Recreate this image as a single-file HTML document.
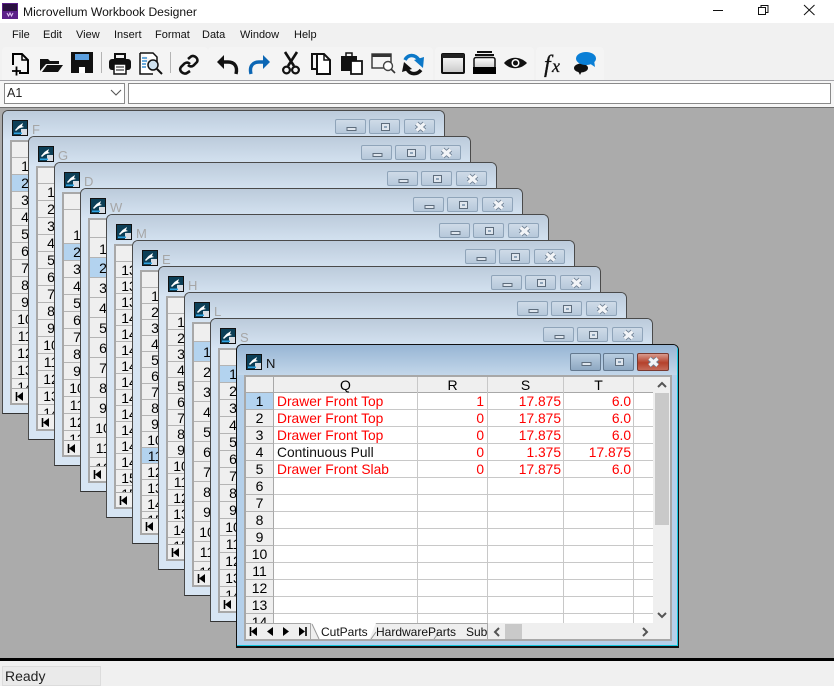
<!DOCTYPE html>
<html><head><meta charset="utf-8"><style>
html,body{margin:0;padding:0;width:834px;height:686px;overflow:hidden;background:#f0f0f0;font-family:"Liberation Sans",sans-serif;color:#000}
div,span,b{box-sizing:border-box}
.a{position:absolute}
.menu span{position:absolute;top:28px;font-size:11px;line-height:14px;color:#111}
.w{position:absolute;width:443px;height:304px;background:#d7e5f3;border:1px solid #4a4a4a;border-bottom-color:#333;border-radius:6px 6px 0 0;overflow:hidden}
.w .tb{position:absolute;left:0;top:0;right:0;height:30px;background:linear-gradient(#bccbdb,#d7e5f3)}
.w .t{position:absolute;left:29px;top:11px;font-size:13px;line-height:15px;color:#a6a6a6}
.w svg.i{position:absolute;left:9px;top:9px}
.btn{position:absolute;top:8px;height:15px;width:31px;border:1px solid #8fa4b9;border-radius:2px;background:linear-gradient(#cfdbe8,#b6c8da)}
.btn svg{position:absolute;left:0;top:0}
.g{position:absolute;left:7px;top:29px;width:427px;height:265px;border:2px solid #a8a8a8;background:#fff;overflow:hidden}
.rows{position:absolute;left:0;top:0;width:27px;height:246px;overflow:hidden;background:#efefef}
.rows b{display:block;font-weight:normal;font-size:14px;text-align:center;border-bottom:1px solid #b4b4b4;border-right:1px solid #a8a8a8;width:27px}
.rows b.s{background:#b3d3ef}
.nav{position:absolute;left:0;top:246px;width:64px;height:17px;background:#efefef;border-top:1px solid #a8a8a8}
.nav svg{position:absolute;left:0;top:0}
.cell{position:absolute;font-size:13.800px;line-height:17px;white-space:nowrap;color:#f00}
</style></head><body>
<svg width="0" height="0" style="position:absolute"><defs>
<symbol id="ic" viewBox="0 0 16 16"><rect x=".5" y=".5" width="15" height="15" fill="#0c3f57" stroke="#111"/><rect x="9" y="9" width="6" height="6" fill="#d8dde4"/><path d="M3 10 C5 8 6 6 8 5 L11 3 L10 6 L12 7 L8 8 C6 9 5 10 4 11Z" fill="#fff"/><rect x="2" y="12.5" width="8" height="1.5" fill="#2ea2e0"/></symbol>
<symbol id="mn" viewBox="0 0 31 15"><rect x="11" y="7.500" width="9" height="3" fill="#dfe6ee" stroke="#5d6c7c"/></symbol>
<symbol id="rs" viewBox="0 0 31 15"><rect x="11.500" y="3.500" width="8" height="7" fill="#dfe6ee" stroke="#5d6c7c"/><rect x="14" y="6" width="3" height="2" fill="#8fa4b9"/></symbol>
<symbol id="xx" viewBox="0 0 31 15"><path d="M11.500 3.500 L19.500 10.500 M19.500 3.500 L11.500 10.500" stroke="#6f8093" stroke-width="5"/><path d="M11.500 3.500 L19.500 10.500 M19.500 3.500 L11.500 10.500" stroke="#f2f4f7" stroke-width="3.200"/></symbol>
<symbol id="fst" viewBox="0 0 64 17"><path d="M4.500 3v9" stroke="#000" stroke-width="1.600"/><path d="M11 3v9l-6-4.500z" fill="#000"/></symbol>
</defs></svg>

<!-- title bar -->
<div class="a" style="left:0;top:0;width:834px;height:23px;background:#fff"></div>
<svg class="a" style="left:2px;top:3px" width="17" height="16"><rect width="16" height="16" fill="#5b1f8a"/><rect x="1" y="1" width="14" height="7" fill="#2a1040"/><path d="M5 10l1.5 3 1.5-3 1.5 3 1.5-3" stroke="#e3c8f5" fill="none"/></svg>
<div class="a" style="left:23px;top:4px;font-size:12.100px;line-height:16px;color:#111;white-space:nowrap">Microvellum Workbook Designer</div>
<svg class="a" style="left:700px;top:0" width="134" height="23" fill="none" stroke="#111" stroke-width="1"><path d="M13 10.5h10"/><path d="M58.5 7.5h7v7h-7zM61 7V5.5h7v7h-2"/><path d="M104 5l10.5 10M114.5 5L104 15"/></svg>

<!-- menu -->
<div class="a" style="left:0;top:23px;width:834px;height:57px;background:#f1f1f1"></div>
<div class="menu"><span style="left:12px">File</span><span style="left:43px">Edit</span><span style="left:76px">View</span><span style="left:114px">Insert</span><span style="left:155px">Format</span><span style="left:202px">Data</span><span style="left:240px">Window</span><span style="left:294px">Help</span></div>

<!-- toolbar bands -->
<div class="a" style="left:2px;top:47px;width:206px;height:33px;background:#f4f4f4;border-radius:4px 4px 0 0"></div>
<div class="a" style="left:208px;top:47px;width:225px;height:33px;background:#f4f4f4;border-radius:4px 4px 0 0"></div>
<div class="a" style="left:435px;top:47px;width:99px;height:33px;background:#f4f4f4;border-radius:4px 4px 0 0"></div>
<div class="a" style="left:536px;top:47px;width:68px;height:33px;background:#f4f4f4;border-radius:4px 4px 0 0"></div>

<svg class="a" style="left:0;top:0" width="620" height="80">
<defs><linearGradient id="gw" x1="0" y1="0" x2="0" y2="1"><stop offset="0" stop-color="#fff"/><stop offset="1" stop-color="#c8c8c8"/></linearGradient></defs>
<!-- new -->
<path d="M19 73h9V60l-6-6H13v11" fill="none" stroke="#000" stroke-width="2"/><path d="M22 54v6h6" fill="none" stroke="#000" stroke-width="1.500"/><path d="M12 71h9M16.500 66.500v9" stroke="#000" stroke-width="1.800"/>
<!-- open -->
<path d="M40 70V59h8l2 2h9v3H46l-6 7z" fill="#111"/><path d="M42 72l5-7h16l-5 7z" fill="#111"/>
<!-- save -->
<path d="M71 52h22v21H71z" fill="#111"/><rect x="75" y="54" width="14" height="6" fill="#5b9fdf"/><rect x="79" y="67" width="6" height="6" fill="#fff"/>
<path d="M101.500 52v21M170.500 52v21" stroke="#b4b4b4"/>
<!-- print -->
<path d="M115 54h10v5h-10z" fill="none" stroke="#111" stroke-width="2"/><rect x="109" y="59" width="22" height="11" rx="3" fill="#111"/><rect x="114" y="64" width="12" height="10" fill="#fff" stroke="#111" stroke-width="1.500"/><path d="M116 67h8M116 70h8" stroke="#111"/>
<!-- preview -->
<path d="M140 53h13l4 4v6M140 53v21h13" fill="#fff" stroke="#111" stroke-width="1.500"/><path d="M142 58h5M142 61h5M142 64h4M142 67h4" stroke="#3a8fd0" stroke-width="1.500"/><circle cx="153" cy="65" r="5" fill="#cfe2f0" stroke="#111" stroke-width="1.500"/><path d="M157 69l5 5" stroke="#111" stroke-width="2"/>
<!-- link -->
<path d="M188 59l3-2.500c3-2 8 2 6 5.500l-3.500 3.500c-2 1.500-4 1-5.500-.5" fill="none" stroke="#111" stroke-width="2.600"/><path d="M190 71l-3 2c-3 2-9-2-6-6l3.500-3.500c2-1.500 4-1 5.500.5" fill="none" stroke="#111" stroke-width="2.600"/>
<!-- undo/redo -->
<path d="M222 62h6c6 0 10 4 8 12" fill="none" stroke="#111" stroke-width="3.400"/><path d="M217 62l7-7v14z" fill="#111"/>
<path d="M265 62h-6c-6 0-10 4-8 12" fill="none" stroke="#0c66b4" stroke-width="3.400"/><path d="M270 62l-7-7v14z" fill="#0c66b4"/>
<!-- scissors -->
<path d="M285 52l9 14M297 52l-9 14" stroke="#111" stroke-width="2.600"/><circle cx="286.500" cy="70" r="3.400" fill="none" stroke="#111" stroke-width="2.200"/><circle cx="295.500" cy="70" r="3.400" fill="none" stroke="#111" stroke-width="2.200"/>
<!-- copy -->
<path d="M316 54h-4v15h5" fill="none" stroke="#111" stroke-width="2"/><path d="M317 54h7l6 6v14h-13z" fill="#fff" stroke="#111" stroke-width="2"/><path d="M324 54v6h6" fill="none" stroke="#111" stroke-width="1.500"/>
<!-- paste -->
<rect x="341" y="56" width="16" height="15" fill="#111"/><rect x="346" y="53" width="6" height="4" fill="none" stroke="#111" stroke-width="1.500"/><path d="M351 61h11v13h-11z" fill="#fff" stroke="#111" stroke-width="1.800"/>
<!-- window search -->
<rect x="372" y="54" width="19" height="14" fill="#f4f4f4" stroke="#333" stroke-width="1.400"/><rect x="372" y="54" width="19" height="3" fill="#333"/><circle cx="388" cy="66" r="4.500" fill="#fff" stroke="#444" stroke-width="1.400"/><path d="M391 69l4 4" stroke="#333" stroke-width="1.600"/>
<!-- refresh -->
<path d="M405 60C408 54 415 54 419 60" fill="none" stroke="#0c78c8" stroke-width="3.500"/><path d="M414 60L424 57L423 68z" fill="#0c78c8"/><path d="M421 70C417 75 410 75 407 69" fill="none" stroke="#111" stroke-width="3.500"/><path d="M412 69L402 72L404 62z" fill="#111"/>
<!-- window -->
<rect x="442" y="54" width="22" height="19" rx="1" fill="url(#gw)" stroke="#111" stroke-width="2"/><rect x="442" y="54" width="22" height="4" fill="#222"/>
<!-- stack -->
<path d="M477 52h15M475 55h19" stroke="#111" stroke-width="2"/><rect x="474" y="57.500" width="21" height="11" rx="2" fill="url(#gw)" stroke="#111" stroke-width="1.500"/><rect x="473" y="67" width="23" height="7" fill="#000"/>
<!-- eye -->
<path d="M504 63c6-7 16-7 23 0c-7 7-17 7-23 0z" fill="#111"/><circle cx="515.500" cy="63" r="4" fill="#fff"/><circle cx="515.500" cy="63" r="2.500" fill="#111"/>
<!-- chat -->
<ellipse cx="581" cy="68" rx="7" ry="4.500" fill="#111"/><path d="M578 71l2 4 2-4z" fill="#111"/>
<ellipse cx="586" cy="58.500" rx="10" ry="6.500" fill="#0a7fd6"/><path d="M589 63l6 4-1-7z" fill="#0a7fd6"/>
<text x="544" y="72" font-family="Liberation Serif" font-style="italic" font-size="24" fill="#111" stroke="#111" stroke-width=".3">f</text><text x="552" y="72" font-family="Liberation Serif" font-style="italic" font-size="18" fill="#111" stroke="#111" stroke-width=".3">x</text>
</svg>

<!-- formula bar -->
<div class="a" style="left:0;top:80px;width:834px;height:1px;background:#a3a3a8"></div>
<div class="a" style="left:0;top:81px;width:834px;height:26px;background:#f6f6f6"></div>
<div class="a" style="left:4px;top:83px;width:121px;height:21px;background:#fff;border:1px solid #8a8a8a;font-size:12.500px;line-height:18px;padding-left:2px;color:#222">A1</div>
<svg class="a" style="left:110px;top:88px" width="12" height="10"><path d="M1 2l5 5 5-5" fill="none" stroke="#555" stroke-width="1.100"/></svg>
<div class="a" style="left:128px;top:83px;width:703px;height:21px;background:#fff;border:1px solid #8a8a8a"></div>

<!-- MDI -->
<div class="a" style="left:0;top:107px;width:834px;height:551px;background:#ababab;border-top:1px solid #6e6e6e"></div>

<!-- F -->
<div class="w" style="left:2px;top:110px"><div class="tb"></div><svg class="i" width="16" height="16"><use href="#ic"/></svg><div class="t">F</div>
<div class="btn" style="left:332px"><svg width="31" height="15"><use href="#mn"/></svg></div><div class="btn" style="left:366px"><svg width="31" height="15"><use href="#rs"/></svg></div><div class="btn" style="left:401px"><svg width="31" height="15"><use href="#xx"/></svg></div>
<div class="g"><div class="rows" style="line-height:16px"><b style="height:16px"></b><b style="height:17px;line-height:17px">1</b><b class="s" style="height:17px;line-height:17px">2</b><b style="height:17px;line-height:17px">3</b><b style="height:17px;line-height:17px">4</b><b style="height:17px;line-height:17px">5</b><b style="height:17px;line-height:17px">6</b><b style="height:17px;line-height:17px">7</b><b style="height:17px;line-height:17px">8</b><b style="height:17px;line-height:17px">9</b><b style="height:17px;line-height:17px">10</b><b style="height:17px;line-height:17px">11</b><b style="height:17px;line-height:17px">12</b><b style="height:17px;line-height:17px">13</b><b style="height:17px;line-height:17px">14</b></div><div class="nav"><svg width="64" height="17"><use href="#fst"/></svg></div></div></div>

<!-- G -->
<div class="w" style="left:28px;top:136px"><div class="tb"></div><svg class="i" width="16" height="16"><use href="#ic"/></svg><div class="t">G</div>
<div class="btn" style="left:332px"><svg width="31" height="15"><use href="#mn"/></svg></div><div class="btn" style="left:366px"><svg width="31" height="15"><use href="#rs"/></svg></div><div class="btn" style="left:401px"><svg width="31" height="15"><use href="#xx"/></svg></div>
<div class="g"><div class="rows"><b style="height:16px"></b><b style="height:17px;line-height:17px">1</b><b style="height:17px;line-height:17px">2</b><b style="height:17px;line-height:17px">3</b><b style="height:17px;line-height:17px">4</b><b style="height:17px;line-height:17px">5</b><b style="height:17px;line-height:17px">6</b><b style="height:17px;line-height:17px">7</b><b style="height:17px;line-height:17px">8</b><b style="height:17px;line-height:17px">9</b><b style="height:17px;line-height:17px">10</b><b style="height:17px;line-height:17px">11</b><b style="height:17px;line-height:17px">12</b><b style="height:17px;line-height:17px">13</b><b style="height:17px;line-height:17px">14</b></div><div class="nav"><svg width="64" height="17"><use href="#fst"/></svg></div></div></div>

<!-- D -->
<div class="w" style="left:54px;top:162px"><div class="tb"></div><svg class="i" width="16" height="16"><use href="#ic"/></svg><div class="t">D</div>
<div class="btn" style="left:332px"><svg width="31" height="15"><use href="#mn"/></svg></div><div class="btn" style="left:366px"><svg width="31" height="15"><use href="#rs"/></svg></div><div class="btn" style="left:401px"><svg width="31" height="15"><use href="#xx"/></svg></div>
<div class="g"><div class="rows"><b style="height:16px"></b><b style="height:34px;line-height:50px">1</b><b class="s" style="height:17px;line-height:17px">2</b><b style="height:17px;line-height:17px">3</b><b style="height:17px;line-height:17px">4</b><b style="height:17px;line-height:17px">5</b><b style="height:17px;line-height:17px">6</b><b style="height:17px;line-height:17px">7</b><b style="height:17px;line-height:17px">8</b><b style="height:17px;line-height:17px">9</b><b style="height:17px;line-height:17px">10</b><b style="height:17px;line-height:17px">11</b><b style="height:17px;line-height:17px">12</b><b style="height:17px;line-height:17px">13</b></div><div class="nav"><svg width="64" height="17"><use href="#fst"/></svg></div></div></div>

<!-- W -->
<div class="w" style="left:80px;top:188px"><div class="tb"></div><svg class="i" width="16" height="16"><use href="#ic"/></svg><div class="t">W</div>
<div class="btn" style="left:332px"><svg width="31" height="15"><use href="#mn"/></svg></div><div class="btn" style="left:366px"><svg width="31" height="15"><use href="#rs"/></svg></div><div class="btn" style="left:401px"><svg width="31" height="15"><use href="#xx"/></svg></div>
<div class="g"><div class="rows"><b style="height:18px"></b><b style="height:20px;line-height:22px">1</b><b class="s" style="height:20px;line-height:20px">2</b><b style="height:20px;line-height:20px">3</b><b style="height:20px;line-height:20px">4</b><b style="height:20px;line-height:20px">5</b><b style="height:20px;line-height:20px">6</b><b style="height:20px;line-height:20px">7</b><b style="height:20px;line-height:20px">8</b><b style="height:20px;line-height:20px">9</b><b style="height:20px;line-height:20px">10</b><b style="height:20px;line-height:20px">11</b><b style="height:20px;line-height:20px">12</b></div><div class="nav"><svg width="64" height="17"><use href="#fst"/></svg></div></div></div>

<!-- M -->
<div class="w" style="left:106px;top:214px"><div class="tb"></div><svg class="i" width="16" height="16"><use href="#ic"/></svg><div class="t">M</div>
<div class="btn" style="left:332px"><svg width="31" height="15"><use href="#mn"/></svg></div><div class="btn" style="left:366px"><svg width="31" height="15"><use href="#rs"/></svg></div><div class="btn" style="left:401px"><svg width="31" height="15"><use href="#xx"/></svg></div>
<div class="g"><div class="rows"><b style="height:16px"></b><b style="height:16px;line-height:16px">13</b><b style="height:16px;line-height:16px">13</b><b style="height:16px;line-height:16px">13</b><b style="height:16px;line-height:16px">14</b><b style="height:16px;line-height:16px">14</b><b style="height:16px;line-height:16px">14</b><b style="height:16px;line-height:16px">14</b><b style="height:16px;line-height:16px">14</b><b style="height:16px;line-height:16px">14</b><b style="height:16px;line-height:16px">14</b><b style="height:16px;line-height:16px">14</b><b style="height:16px;line-height:16px">14</b><b style="height:16px;line-height:16px">14</b><b style="height:16px;line-height:16px">15</b><b style="height:16px;line-height:16px">15</b></div><div class="nav"><svg width="64" height="17"><use href="#fst"/></svg></div></div></div>

<!-- E -->
<div class="w" style="left:132px;top:240px"><div class="tb"></div><svg class="i" width="16" height="16"><use href="#ic"/></svg><div class="t">E</div>
<div class="btn" style="left:332px"><svg width="31" height="15"><use href="#mn"/></svg></div><div class="btn" style="left:366px"><svg width="31" height="15"><use href="#rs"/></svg></div><div class="btn" style="left:401px"><svg width="31" height="15"><use href="#xx"/></svg></div>
<div class="g"><div class="rows"><b style="height:16px"></b><b style="height:16px;line-height:16px">1</b><b style="height:16px;line-height:16px">2</b><b style="height:16px;line-height:16px">3</b><b style="height:16px;line-height:16px">4</b><b style="height:16px;line-height:16px">5</b><b style="height:16px;line-height:16px">6</b><b style="height:16px;line-height:16px">7</b><b style="height:16px;line-height:16px">8</b><b style="height:16px;line-height:16px">9</b><b style="height:16px;line-height:16px">10</b><b class="s" style="height:16px;line-height:16px">11</b><b style="height:16px;line-height:16px">12</b><b style="height:16px;line-height:16px">13</b><b style="height:16px;line-height:16px">14</b><b style="height:16px;line-height:16px">15</b></div><div class="nav"><svg width="64" height="17"><use href="#fst"/></svg></div></div></div>

<!-- H -->
<div class="w" style="left:158px;top:266px"><div class="tb"></div><svg class="i" width="16" height="16"><use href="#ic"/></svg><div class="t">H</div>
<div class="btn" style="left:332px"><svg width="31" height="15"><use href="#mn"/></svg></div><div class="btn" style="left:366px"><svg width="31" height="15"><use href="#rs"/></svg></div><div class="btn" style="left:401px"><svg width="31" height="15"><use href="#xx"/></svg></div>
<div class="g"><div class="rows"><b style="height:16px"></b><b style="height:16px;line-height:16px">1</b><b style="height:16px;line-height:16px">2</b><b style="height:16px;line-height:16px">3</b><b style="height:16px;line-height:16px">4</b><b style="height:16px;line-height:16px">5</b><b style="height:16px;line-height:16px">6</b><b style="height:16px;line-height:16px">7</b><b style="height:16px;line-height:16px">8</b><b style="height:16px;line-height:16px">9</b><b style="height:16px;line-height:16px">10</b><b style="height:16px;line-height:16px">11</b><b style="height:16px;line-height:16px">12</b><b style="height:16px;line-height:16px">13</b><b style="height:16px;line-height:16px">14</b><b style="height:16px;line-height:16px">15</b></div><div class="nav"><svg width="64" height="17"><use href="#fst"/></svg></div></div></div>

<!-- L -->
<div class="w" style="left:184px;top:292px"><div class="tb"></div><svg class="i" width="16" height="16"><use href="#ic"/></svg><div class="t">L</div>
<div class="btn" style="left:332px"><svg width="31" height="15"><use href="#mn"/></svg></div><div class="btn" style="left:366px"><svg width="31" height="15"><use href="#rs"/></svg></div><div class="btn" style="left:401px"><svg width="31" height="15"><use href="#xx"/></svg></div>
<div class="g"><div class="rows"><b style="height:18px"></b><b class="s" style="height:20px;line-height:20px">1</b><b style="height:20px;line-height:20px">2</b><b style="height:20px;line-height:20px">3</b><b style="height:20px;line-height:20px">4</b><b style="height:20px;line-height:20px">5</b><b style="height:20px;line-height:20px">6</b><b style="height:20px;line-height:20px">7</b><b style="height:20px;line-height:20px">8</b><b style="height:20px;line-height:20px">9</b><b style="height:20px;line-height:20px">10</b><b style="height:20px;line-height:20px">11</b><b style="height:20px;line-height:20px">12</b></div><div class="nav"><svg width="64" height="17"><use href="#fst"/></svg></div></div></div>

<!-- S -->
<div class="w" style="left:210px;top:318px"><div class="tb"></div><svg class="i" width="16" height="16"><use href="#ic"/></svg><div class="t">S</div>
<div class="btn" style="left:332px"><svg width="31" height="15"><use href="#mn"/></svg></div><div class="btn" style="left:366px"><svg width="31" height="15"><use href="#rs"/></svg></div><div class="btn" style="left:401px"><svg width="31" height="15"><use href="#xx"/></svg></div>
<div class="g"><div class="rows"><b style="height:16px"></b><b class="s" style="height:17px;line-height:17px">1</b><b style="height:17px;line-height:17px">2</b><b style="height:17px;line-height:17px">3</b><b style="height:17px;line-height:17px">4</b><b style="height:17px;line-height:17px">5</b><b style="height:17px;line-height:17px">6</b><b style="height:17px;line-height:17px">7</b><b style="height:17px;line-height:17px">8</b><b style="height:17px;line-height:17px">9</b><b style="height:17px;line-height:17px">10</b><b style="height:17px;line-height:17px">11</b><b style="height:17px;line-height:17px">12</b><b style="height:17px;line-height:17px">13</b><b style="height:17px;line-height:17px">14</b></div><div class="nav"><svg width="64" height="17"><use href="#fst"/></svg></div></div></div>

<!-- N active -->
<div class="a" style="left:236px;top:344px;width:443px;height:304px;background:#b5d0ea;border:1px solid #111;border-bottom:2px solid #111;border-radius:6px 6px 0 0;overflow:hidden">
<div class="a" style="left:0;top:0;right:0;height:30px;background:linear-gradient(#97b5d4,#c3d7ea)"></div>
<div class="a" style="left:0;bottom:0;right:0;height:1px;background:#14c8e0"></div>
<div class="a" style="right:0;top:0;bottom:0;width:1px;background:#14c8e0"></div>
<svg class="a" style="left:9px;top:9px" width="16" height="16"><use href="#ic"/></svg>
<div class="a" style="left:29px;top:11px;font-size:13px;line-height:15px;color:#111">N</div>
<div class="a" style="left:333px;top:8px;width:31px;height:18px;border:1px solid #64798f;border-radius:2px;background:linear-gradient(#b9cde0,#8ea8c2)"><svg class="a" style="left:0;top:1px" width="31" height="15"><use href="#mn"/></svg></div>
<div class="a" style="left:366px;top:8px;width:31px;height:18px;border:1px solid #64798f;border-radius:2px;background:linear-gradient(#b9cde0,#8ea8c2)"><svg class="a" style="left:0;top:1px" width="31" height="15"><use href="#rs"/></svg></div>
<div class="a" style="left:400px;top:8px;width:32px;height:18px;border:1px solid #7a3a30;border-radius:2px;background:linear-gradient(#d99a8c,#b5412c 55%,#c46a58)"><svg class="a" style="left:0;top:1px" width="31" height="15"><use href="#xx"/></svg></div>

<div class="a" style="left:7px;top:30px;width:428px;height:266px;border:2px solid #a8a8a8;background:#fff;overflow:hidden">
 <div class="a" style="left:0;top:0;width:426px;height:16px;background:#efefef"></div>
 <div class="a" style="left:0;top:0;width:27px;height:246px;background:#efefef"></div>
 <div class="a" style="left:0;top:15px;width:407px;height:1px;background:#a8a8a8"></div>
 <div class="a" style="left:27px;top:32px;width:380px;height:1px;background:#c8c8c8"></div>
 <div class="a" style="left:27px;top:49px;width:380px;height:1px;background:#c8c8c8"></div>
 <div class="a" style="left:27px;top:66px;width:380px;height:1px;background:#c8c8c8"></div>
 <div class="a" style="left:27px;top:83px;width:380px;height:1px;background:#c8c8c8"></div>
 <div class="a" style="left:27px;top:100px;width:380px;height:1px;background:#c8c8c8"></div>
 <div class="a" style="left:27px;top:117px;width:380px;height:1px;background:#c8c8c8"></div>
 <div class="a" style="left:27px;top:134px;width:380px;height:1px;background:#c8c8c8"></div>
 <div class="a" style="left:27px;top:151px;width:380px;height:1px;background:#c8c8c8"></div>
 <div class="a" style="left:27px;top:168px;width:380px;height:1px;background:#c8c8c8"></div>
 <div class="a" style="left:27px;top:185px;width:380px;height:1px;background:#c8c8c8"></div>
 <div class="a" style="left:27px;top:202px;width:380px;height:1px;background:#c8c8c8"></div>
 <div class="a" style="left:27px;top:219px;width:380px;height:1px;background:#c8c8c8"></div>
 <div class="a" style="left:27px;top:236px;width:380px;height:1px;background:#c8c8c8"></div>
 <div class="a" style="left:27px;top:0;width:1px;height:246px;background:#a8a8a8"></div>
 <div class="a" style="left:171px;top:0;width:1px;height:246px;background:#c8c8c8"></div>
 <div class="a" style="left:241px;top:0;width:1px;height:246px;background:#c8c8c8"></div>
 <div class="a" style="left:317px;top:0;width:1px;height:246px;background:#c8c8c8"></div>
 <div class="a" style="left:387px;top:0;width:1px;height:246px;background:#c8c8c8"></div>
 <div class="rows" style="width:28px;background:transparent">
  <b style="height:16px;border-bottom-color:#a8a8a8;width:28px"></b>
  <b class="s" style="height:17px;line-height:17px;width:28px">1</b><b style="height:17px;line-height:17px;width:28px">2</b><b style="height:17px;line-height:17px;width:28px">3</b><b style="height:17px;line-height:17px;width:28px">4</b><b style="height:17px;line-height:17px;width:28px">5</b><b style="height:17px;line-height:17px;width:28px">6</b><b style="height:17px;line-height:17px;width:28px">7</b><b style="height:17px;line-height:17px;width:28px">8</b><b style="height:17px;line-height:17px;width:28px">9</b><b style="height:17px;line-height:17px;width:28px">10</b><b style="height:17px;line-height:17px;width:28px">11</b><b style="height:17px;line-height:17px;width:28px">12</b><b style="height:17px;line-height:17px;width:28px">13</b><b style="height:17px;line-height:17px;width:28px">14</b>
 </div>
 <div class="a" style="left:28px;top:0;width:143px;text-align:center;font-size:14px;line-height:16px">Q</div>
 <div class="a" style="left:172px;top:0;width:69px;text-align:center;font-size:14px;line-height:16px">R</div>
 <div class="a" style="left:242px;top:0;width:75px;text-align:center;font-size:14px;line-height:16px">S</div>
 <div class="a" style="left:318px;top:0;width:69px;text-align:center;font-size:14px;line-height:16px">T</div>

 <div class="cell" style="left:31px;top:16px">Drawer Front Top</div><div class="cell" style="right:186px;top:16px">1</div><div class="cell" style="right:109px;top:16px">17.875</div><div class="cell" style="right:39px;top:16px">6.0</div>
 <div class="cell" style="left:31px;top:33px">Drawer Front Top</div><div class="cell" style="right:186px;top:33px">0</div><div class="cell" style="right:109px;top:33px">17.875</div><div class="cell" style="right:39px;top:33px">6.0</div>
 <div class="cell" style="left:31px;top:50px">Drawer Front Top</div><div class="cell" style="right:186px;top:50px">0</div><div class="cell" style="right:109px;top:50px">17.875</div><div class="cell" style="right:39px;top:50px">6.0</div>
 <div class="cell" style="left:31px;top:67px;color:#111">Continuous Pull</div><div class="cell" style="right:186px;top:67px">0</div><div class="cell" style="right:109px;top:67px">1.375</div><div class="cell" style="right:39px;top:67px">17.875</div>
 <div class="cell" style="left:31px;top:84px">Drawer Front Slab</div><div class="cell" style="right:186px;top:84px">0</div><div class="cell" style="right:109px;top:84px">17.875</div><div class="cell" style="right:39px;top:84px">6.0</div>

 <!-- v scrollbar -->
 <div class="a" style="left:407px;top:0;width:17px;height:246px;background:#efefef"></div>
 <div class="a" style="left:409px;top:16px;width:14px;height:132px;background:#c9c9c9"></div>
 <svg class="a" style="left:409px;top:3px" width="14" height="10"><path d="M3 7l4-4 4 4" fill="none" stroke="#555" stroke-width="2"/></svg>
 <svg class="a" style="left:409px;top:233px" width="14" height="10"><path d="M3 3l4 4 4-4" fill="none" stroke="#555" stroke-width="2"/></svg>

 <!-- tab row -->
 <div class="a" style="left:0;top:246px;width:424px;height:18px;background:#efefef"></div>
 <div class="a" style="left:0;top:246px;width:242px;height:1px;background:#a8a8a8"></div>
 <svg class="a" style="left:0;top:246px" width="250" height="18">
  <path d="M65 0 L73 17 H123 L130 0z" fill="#fff"/>
  <path d="M64.500 0V18" stroke="#a8a8a8"/>
  <path d="M66 1l7 15M125 16l5-7M188 16l5-7" stroke="#999" fill="none"/>
  <path d="M241.500 0V18" stroke="#a8a8a8"/>
  <path d="M4.500 4v9" stroke="#000" stroke-width="1.600"/><path d="M11 4v9l-6-4.500z" fill="#000"/>
  <path d="M27 4v9l-6-4.500z" fill="#000"/>
  <path d="M37 4v9l6-4.500z" fill="#000"/>
  <path d="M53 4v9l6-4.500z" fill="#000"/><path d="M60 4v9" stroke="#000" stroke-width="1.600"/>
 </svg>
 <div class="a" style="left:75px;top:248px;font-size:12px;line-height:15px;color:#111">CutParts</div>
 <div class="a" style="left:130px;top:248px;font-size:12px;line-height:15px;color:#111">HardwareParts</div>
 <div class="a" style="left:220px;top:248px;width:21px;overflow:hidden;font-size:12px;line-height:15px;color:#111">Sub</div>
 <div class="a" style="left:259px;top:247px;width:17px;height:15px;background:#c9c9c9"></div>
 <svg class="a" style="left:245px;top:249px" width="14" height="12"><path d="M8 2L4 6l4 4" fill="none" stroke="#555" stroke-width="2"/></svg>
 <svg class="a" style="left:393px;top:249px" width="14" height="12"><path d="M4 2l4 4-4 4" fill="none" stroke="#555" stroke-width="2"/></svg>
</div>
</div>

<!-- status -->
<div class="a" style="left:0;top:658px;width:834px;height:3px;background:#000"></div>
<div class="a" style="left:0;top:661px;width:834px;height:25px;background:#f0f0f0"></div>
<div class="a" style="left:2px;top:666px;width:99px;height:20px;background:#eaeaea;border:1px solid #dcdcdc;font-size:14px;line-height:19px;padding-left:2px;color:#222">Ready</div>
</body></html>
